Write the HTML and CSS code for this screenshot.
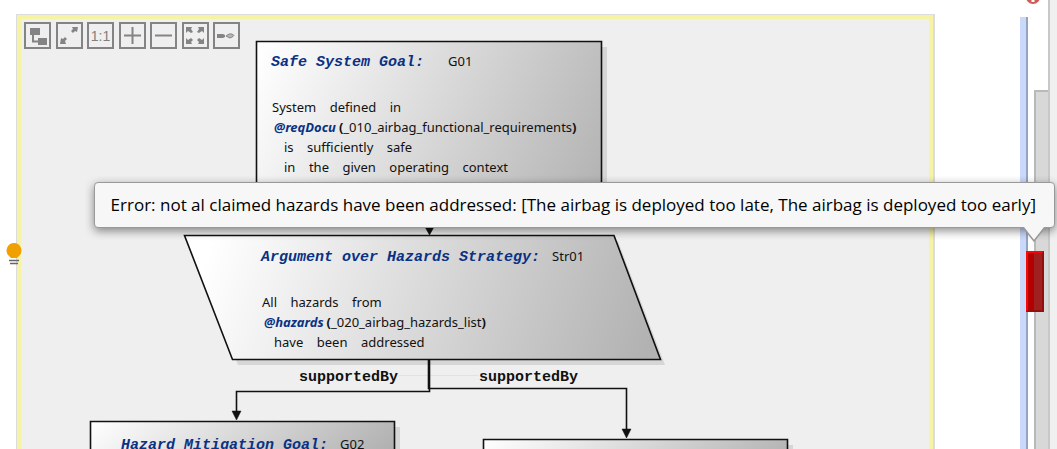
FILE: index.html
```html
<!DOCTYPE html>
<html lang="en">
<head>
<meta charset="utf-8">
<title>Safety argument diagram</title>
<link rel="stylesheet" href="styles.css">
</head>
<body>
<div class="editor">
  <main class="frame">
    <div class="canvas">
      <svg class="shapes" width="908" height="430" viewBox="21 19 908 430" aria-hidden="true">
        <defs>
          <linearGradient id="goal" gradientUnits="userSpaceOnUse" x1="266" y1="36" x2="595" y2="190"><stop offset="0" stop-color="#fff"/><stop offset="1" stop-color="#b4b4b4"/></linearGradient>
          <linearGradient id="strategy" gradientUnits="userSpaceOnUse" x1="215" y1="230" x2="640" y2="370"><stop offset="0" stop-color="#fff"/><stop offset="1" stop-color="#b2b2b2"/></linearGradient>
          <linearGradient id="sub" x1="0" y1="0" x2="1" y2=".4"><stop offset="0" stop-color="#fff"/><stop offset="1" stop-color="#acacac"/></linearGradient>
        </defs>
        <g fill="#d6d6d6">
          <path d="M262 47H607V216H262ZM190 241H618L665 365H238ZM96 427H400V530H96ZM489 445H793V540H489Z"/>
        </g>
        <g stroke="#111" stroke-width="1.6">
          <path fill="url(#goal)" d="M256.500 41.5H601.500V210H256.500Z"/>
          <path fill="url(#strategy)" d="M184.500 235.500H614L660.500 359.500H232.500Z"/>
          <path fill="url(#sub)" d="M90.500 421.500H394.500V524H90.500Z"/>
          <path fill="url(#sub)" d="M483.500 439.500H787.500V542H483.500Z"/>
        </g>
        <path d="M399 375.500H478" stroke="#e2e2e2"/>
        <g fill="none" stroke="#111" stroke-width="1.600">
          <path d="M429.500 210V228M429.500 359V391.500H236.500V413M428.500 359V388.500H626.500V431"/>
        </g>
        <path d="M425 227H434L429.500 235ZM232 411H241L236.500 420ZM622 429H631L626.500 438Z" fill="#111" stroke="#111" stroke-width=".5"/>
      </svg>

      <div class="toolbar" role="toolbar" aria-label="Diagram tools">
        <button aria-label="Arrange automatically"><svg viewBox="0 0 27 27"><path fill="#848484" d="M6 6h10v7H6zM14 16h9v7h-9z"/><path d="M9 12v7.500h6" fill="none" stroke="#848484" stroke-width="2"/></svg></button>
        <button aria-label="Fit to window"><svg viewBox="0 0 27 27"><path fill="#848484" d="M16 5h6l-1 5-2-1-2 2-2-2 2-2zM4 22l1-6 2 1 2-2 2 2-2 2 1 3z"/></svg></button>
        <button class="actual" aria-label="Actual size">1:1</button>
        <button aria-label="Zoom in"><svg viewBox="0 0 27 27"><path d="M5 13.500h17M13.500 5v17" stroke="#848484" stroke-width="2"/></svg></button>
        <button aria-label="Zoom out"><svg viewBox="0 0 27 27"><path d="M5 13.500h17" stroke="#848484" stroke-width="2"/></svg></button>
        <button aria-label="Full screen"><svg viewBox="0 0 27 27"><path fill="#848484" d="M4 5h6l-1 2 2 3-2 1-3-2-2 2zM22 5h-6l1 2-2 3 2 1 3-2 2 2zM4 22h6l-1-2 2-2-2-2-3 2-2-2zM22 22h-6l1-2-2-2 2-2 3 2 2-2z"/></svg></button>
        <button aria-label="Toggle connectors"><svg viewBox="0 0 27 27"><path fill="#848484" d="M4 12h6l2 1v2l-2 1H4z"/><path d="M20 14.500l-3 1.500-4-2 3-2h3l2 1.500z" fill="#b8b8b8" stroke="#848484"/></svg></button>
      </div>

      <div class="node goal">
        <p><b class="kind">Safe System Goal:</b><span class="id far">G01</span></p>
        <div class="text">
          <p>System    defined    in</p>
          <p><a class="ref" href="#reqDocu">@reqDocu</a><b>(</b>_010_airbag_functional_requirements<b>)</b></p>
          <p class="indent">is    sufficiently    safe</p>
          <p class="indent">in    the    given    operating    context</p>
        </div>
      </div>
      <div class="node strategy">
        <p><b class="kind">Argument over Hazards Strategy:</b><span class="id">Str01</span></p>
        <div class="text">
          <p>All    hazards    from</p>
          <p><a class="ref" href="#hazards">@hazards</a><b>(</b>_020_airbag_hazards_list<b>)</b></p>
          <p class="indent">have    been    addressed</p>
        </div>
      </div>
      <div class="node mitigation"><p><b class="kind">Hazard Mitigation Goal:</b><span class="id">G02</span></p></div>
      <b class="edge left">supportedBy</b>
      <b class="edge right">supportedBy</b>
    </div>
    <svg class="bulb" width="16" height="22" viewBox="0 0 16 22" aria-hidden="true"><path d="M8 0a7.500 7.500 0 0 1 5 13l-2 2H5l-2-2A7.500 7.500 0 0 1 8 0z" fill="#f0a000"/><path d="M3 17.500h10M4 20.500h8" stroke="#666" stroke-width="1.400"/></svg>
  </main>
  <aside class="ruler" aria-label="Overview ruler">
    <div class="change"></div>
    <div class="track"><div class="thumb"></div></div>
    <div class="edgebar"></div>
    <div class="marker"></div>
    <svg class="status" width="14" height="14" viewBox="0 0 14 14" aria-hidden="true"><circle cx="7" cy="7" r="7" fill="#cf5b56"/><path d="M7 2v6M7 9v3" stroke="#fff" stroke-width="3"/></svg>
  </aside>
  <div class="tooltip" role="tooltip">Error: not al claimed hazards have been addressed: [The airbag is deployed too late, The airbag is deployed too early]
    <svg class="tip" width="22" height="16" viewBox="0 0 22 16" aria-hidden="true"><path d="M0 -1L11 14L22 -1" fill="#f7f7f7"/><path d="M0 0L11 14L22 0" fill="none" stroke="#999" stroke-width="1.500"/></svg>
  </div>
</div>
</body>
</html>
```
FILE: styles.css
```css
* { box-sizing: border-box; }
body { margin: 0; background: #fff; overflow: hidden; }
p { margin: 0; }
.editor { position: relative; display: flex; height: 100vh; padding: 0 0 0 16px; }
.frame { position: relative; flex: 1; margin-top: 14px; border: 1px solid #dcdcdc; border-right-width: 2px; border-bottom: 0; }
.canvas { position: relative; height: 100%; overflow: hidden; border: 4px solid #f7f3a4; border-bottom: 0; background: #efefef; }
.shapes { position: absolute; left: 0; top: 0; }

.toolbar { position: relative; display: flex; justify-content: space-between; width: 222px; padding: 3px; }
.toolbar button { width: 27px; height: 27px; padding: 0; border: 2px solid #848484; background: none; display: grid; place-items: center; }
.toolbar svg { width: 27px; height: 27px; margin: -2px; }
.toolbar .actual { color: #808080; font: 14px "Liberation Sans", Arial, sans-serif; }

.node, .edge { position: absolute; color: #111; }
.node { font: 13px/20px "Noto Sans", "Open Sans", sans-serif; }
.node p { white-space: pre; }
.kind, .edge { font: bold 15px/20px "Liberation Mono", "Courier New", monospace; }
.kind { font-style: italic; color: #0a3184; }
.id { padding-left: 12px; }
.far { padding-left: 24px; }
.text { padding: 24px 0 0 1px; }
.ref { color: #0a3184; font-weight: bold; font-style: italic; text-decoration: none; padding: 0 3px 0 2px; }
.indent { padding-left: 12px; }
.goal { left: 250px; top: 32px; }
.strategy { left: 240px; top: 227px; }
.mitigation { left: 100px; top: 415px; }
.edge.left { left: 278px; top: 349px; }
.edge.right { left: 458px; top: 349px; }

.bulb { position: absolute; left: -11px; top: 228px; }

.ruler { position: relative; display: flex; width: 37px; margin-left: 85px; background: #f0f0f0; }
.change { width: 8px; background: linear-gradient(90deg, #cad8fa 6px, #94a3bf 6px); border-top: 17px solid #fff; }
.track { flex: 0 0 20px; padding: 90px 0 0 6px; background: #fff; }
.thumb { height: 100%; background: #d8d8d8; border: 2px solid #b9b9b9; border-right: 0; border-bottom: 0; }
.edgebar { width: 2px; background: #c8c8c8; }
.marker { position: absolute; left: 6px; top: 251px; width: 18px; height: 61px; border: 2px solid #901010; border-top-color: #f80808; border-left-color: #f80808; background: linear-gradient(90deg, #b40000 6px, #a02020 6px); }
.status { position: absolute; left: 6px; top: -10px; }

.tooltip { position: absolute; right: 2px; top: 182px; padding: 8px 18px 8px 16px; border: 1px solid #999; border-radius: 4px; background: #f7f7f7; color: #000; font: 17px/28px "Open Sans", "Segoe UI", sans-serif; white-space: nowrap; box-shadow: 0 3px 10px rgba(0, 0, 0, .45); }
.tip { position: absolute; right: 9px; top: 100%; }
```
